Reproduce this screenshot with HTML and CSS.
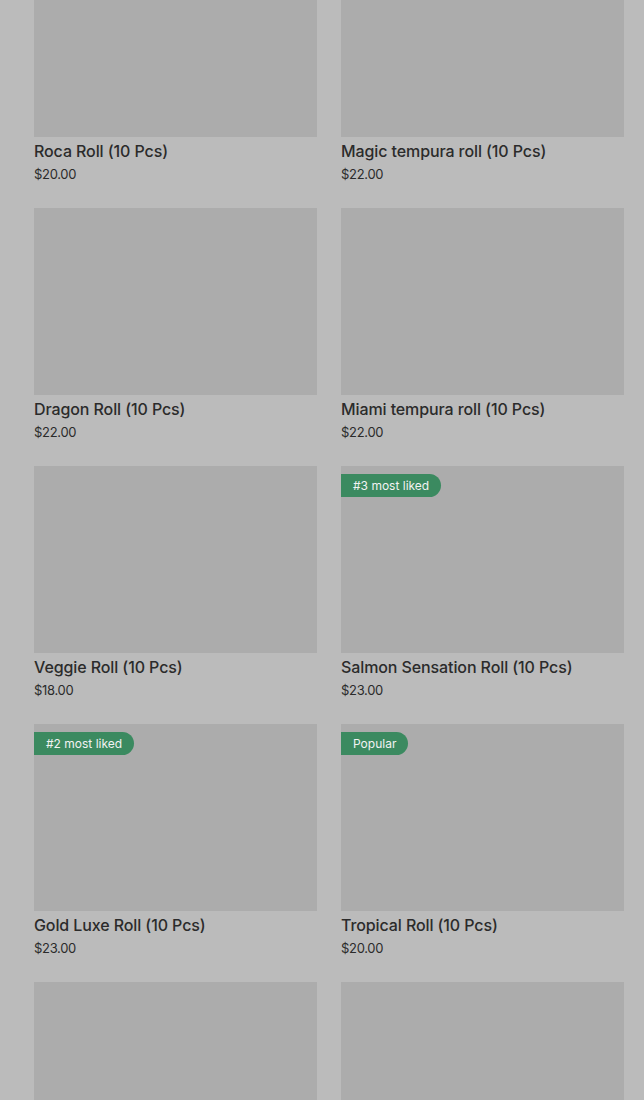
FILE: index.html
```
<!DOCTYPE html>
<html lang="en">

<head>
    <meta charset="UTF-8">
    <meta name="viewport" content="width=device-width, initial-scale=1.0">
    <title>Menu</title>
    <link rel="stylesheet" href="styles.css">
</head>

<body>
    <div class="product-grid">
        <div class="product-card">
            <div class="product-image"></div>
            <div class="product-title">Roca Roll (10 Pcs)</div>
            <div class="product-price">$20.00</div>
        </div>
        <div class="product-card">
            <div class="product-image"></div>
            <div class="product-title">Magic tempura roll (10 Pcs)</div>
            <div class="product-price">$22.00</div>
        </div>
        <div class="product-card">
            <div class="product-image"></div>
            <div class="product-title">Dragon Roll (10 Pcs)</div>
            <div class="product-price">$22.00</div>
        </div>
        <div class="product-card">
            <div class="product-image"></div>
            <div class="product-title">Miami tempura roll (10 Pcs)</div>
            <div class="product-price">$22.00</div>
        </div>
        <div class="product-card">
            <div class="product-image"></div>
            <div class="product-title">Veggie Roll (10 Pcs)</div>
            <div class="product-price">$18.00</div>
        </div>
        <div class="product-card">
            <div class="product-image">
                <span class="badge">#3 most liked</span>
            </div>
            <div class="product-title">Salmon Sensation Roll (10 Pcs)</div>
            <div class="product-price">$23.00</div>
        </div>
        <div class="product-card">
            <div class="product-image">
                <span class="badge">#2 most liked</span>
            </div>
            <div class="product-title">Gold Luxe Roll (10 Pcs)</div>
            <div class="product-price">$23.00</div>
        </div>
        <div class="product-card">
            <div class="product-image">
                <span class="badge">Popular</span>
            </div>
            <div class="product-title">Tropical Roll (10 Pcs)</div>
            <div class="product-price">$20.00</div>
        </div>
        <div class="product-card">
            <div class="product-image"></div>
        </div>
        <div class="product-card">
            <div class="product-image"></div>
        </div>
    </div>
</body>

</html>
```

FILE: styles.css
```
* {
    margin: 0;
    padding: 0;
    box-sizing: border-box;
}

body,
html {
    height: 100%;
    overflow: hidden;
    background: #bbbbbb;
    font-family: 'Inter', 'Liberation Sans', sans-serif;
    color: #2b2b2b;
}

/* page is scrolled a little, first row is cut off */
.product-grid {
    display: grid;
    grid-template-columns: 283px 283px;
    column-gap: 24px;
    row-gap: 25px;
    padding: 0 20px 0 34px;
    margin-top: -50px;
}

.product-card {
    display: flex;
    flex-direction: column;
}

.product-image {
    position: relative;
    height: 187px;
    background: #acacac;
}

.badge {
    position: absolute;
    top: 8px;
    left: 0;
    height: 23px;
    padding: 0 12px;
    display: flex;
    align-items: center;
    background: #3b8a60;
    color: #f2f2f2;
    font-size: 12px;
    border-radius: 0 12px 12px 0;
}

.product-title {
    margin-top: 3px;
    font-size: 16px;
    font-weight: 500;
    line-height: 22px;
    letter-spacing: -0.1px;
}

.product-price {
    margin-top: 3px;
    font-size: 13px;
    line-height: 18px;
    letter-spacing: -0.3px;
}
```
